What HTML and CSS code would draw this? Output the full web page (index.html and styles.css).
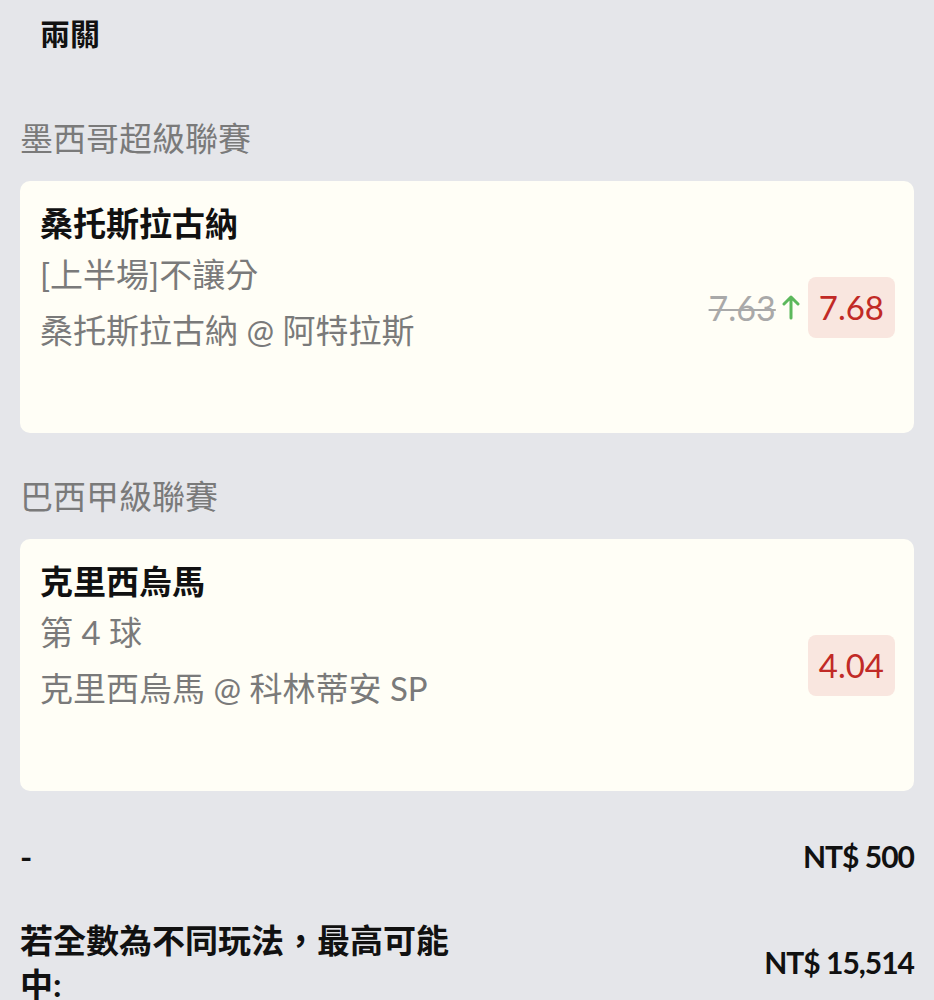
FILE: index.html
```html
<!DOCTYPE html>
<html lang="zh-Hant">
<head>
    <meta charset="UTF-8">
    <meta name="viewport" content="width=device-width, initial-scale=1.0">
    <title>兩關</title>
    <link rel="stylesheet" href="styles.css">
</head>
<body>
    <div class="page">
        <h1 class="title">兩關</h1>

        <div class="league">墨西哥超級聯賽</div>
        <div class="card">
            <div class="info">
                <div class="team">桑托斯拉古納</div>
                <div class="line">[上半場]不讓分</div>
                <div class="line">桑托斯拉古納 @ 阿特拉斯</div>
            </div>
            <div class="odds">
                <span class="old">7.63</span>
                <svg class="up" width="18" height="26" viewBox="0 0 18 26">
                    <path d="M9 24V3M2 10l7-7 7 7" fill="none" stroke="#5cb85c" stroke-width="3" stroke-linecap="round" stroke-linejoin="round"/>
                </svg>
                <span class="badge">7.68</span>
            </div>
        </div>

        <div class="league second">巴西甲級聯賽</div>
        <div class="card">
            <div class="info">
                <div class="team">克里西烏馬</div>
                <div class="line">第 4 球</div>
                <div class="line">克里西烏馬 @ 科林蒂安 SP</div>
            </div>
            <div class="odds">
                <span class="badge">4.04</span>
            </div>
        </div>

        <div class="sum first">
            <div class="label">-</div>
            <div class="amount">NT$ 500</div>
        </div>
        <div class="sum">
            <div class="label">若全數為不同玩法，最高可能中:</div>
            <div class="amount">NT$ 15,514</div>
        </div>
    </div>
</body>
</html>
```

FILE: styles.css
```css
body{
    margin:0;
    background-color:#e5e6ea;
    font-family:Lato, "Noto Sans CJK TC", sans-serif;
}
.page{
    padding:0 20px;
}
.title{
    margin:13px 0 0 20px;
    font-size:30px;
    line-height:40px;
    font-weight:bold;
    color:#111;
}
.league{
    margin-top:62px;
    font-size:33px;
    line-height:46px;
    color:#7a7a7a;
}
.league.second{
    margin-top:40px;
}
.card{
    margin-top:20px;
    background-color:#fffef6;
    border-radius:10px;
    padding:19px 19px 75px 20px;
    display:flex;
    align-items:center;
    justify-content:space-between;
    position:relative;
}
.team{
    font-size:33px;
    line-height:46px;
    font-weight:bold;
    color:#111;
}
.line{
    font-size:33px;
    line-height:56px;
    color:#7a7a7a;
}
.odds{
    position:absolute;
    right:19px;
    top:0;
    bottom:0;
    display:flex;
    align-items:center;
    gap:6px;
}
.old{
    font-size:34px;
    color:#a9a9a9;
    text-decoration:line-through;
    text-decoration-thickness:2px;
}
.up{
    margin-right:2px;
}
.badge{
    background-color:#f9e6df;
    color:#c12a26;
    font-size:33px;
    line-height:37px;
    padding:12px 11px;
    border-radius:8px;
}
.sum{
    display:flex;
    justify-content:space-between;
    align-items:center;
    margin-top:40px;
    font-weight:bold;
    color:#111;
}
.sum.first{
    margin-top:43px;
}
.label{
    width:50%;
    font-size:33px;
    line-height:44px;
}
.amount{
    font-size:30px;
    letter-spacing:-1px;
    line-height:40px;
}
```
